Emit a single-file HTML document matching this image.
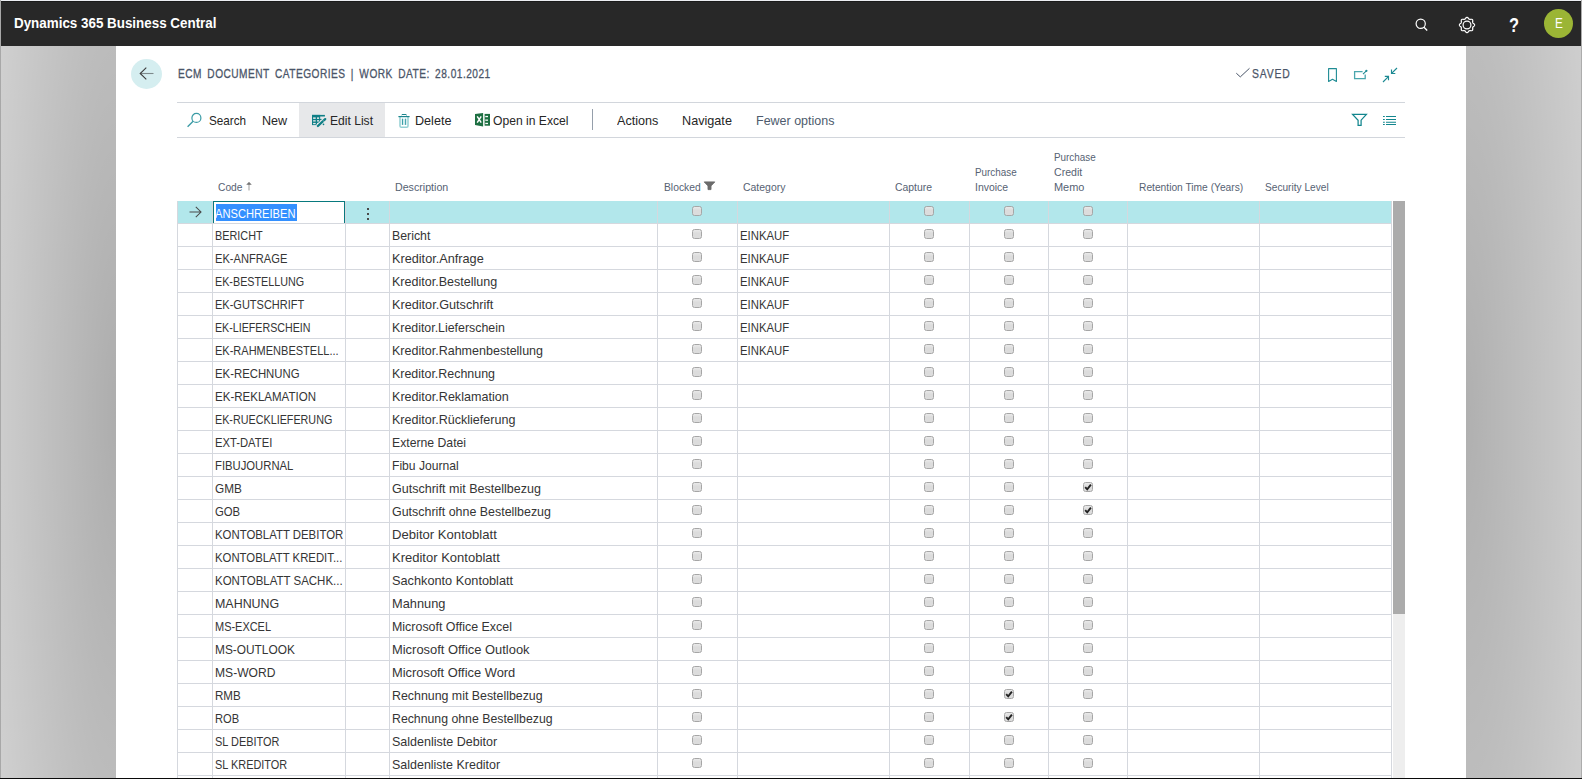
<!DOCTYPE html>
<html><head><meta charset="utf-8">
<style>
*{margin:0;padding:0;box-sizing:border-box}
html,body{width:1582px;height:779px;overflow:hidden;background:#c4c4c4;font-family:"Liberation Sans",sans-serif}
#frame{position:absolute;left:0;top:0;width:1582px;height:779px;overflow:hidden}
#bgL{position:absolute;left:0;top:0;width:116px;height:779px;background:radial-gradient(140px 950px at 116px 412px,rgba(0,0,0,.18),rgba(0,0,0,0)) ,#d3d3d3}
#bgR{position:absolute;left:1466px;top:0;width:116px;height:779px;background:radial-gradient(140px 950px at 0px 412px,rgba(0,0,0,.16),rgba(0,0,0,0)) ,#d1d1d1}
#bL{position:absolute;left:0;top:0;width:1px;height:779px;background:#a8a8a8}
#bR{position:absolute;left:1581px;top:0;width:1px;height:779px;background:#acacac}
#bT{position:absolute;left:1px;top:0;width:1580px;height:1px;background:#eceef2}
#bB{position:absolute;left:0;top:778px;width:1582px;height:1px;background:#0a0a0a}
#top{position:absolute;left:1px;top:1px;width:1580px;height:45px;background:#282828;border-top:1px solid #1b1b1b}
#panel{position:absolute;left:116px;top:46px;width:1350px;height:732px;background:#fff}
.tx{position:absolute;white-space:nowrap;line-height:20px;height:20px;transform-origin:0 50%}
.ic{position:absolute;overflow:visible}
#back{position:absolute;left:131px;top:59px;width:31px;height:30px;border-radius:50%;background:#d5eef0}
.hline{position:absolute;left:177px;width:1228px;height:1px;background:#d2d6dc}
#selbtn{position:absolute;left:299px;top:103px;width:86px;height:34px;background:#e7e8ea}
.row{position:absolute;left:177px;width:1214px;height:23px;border-bottom:1px solid #d5d8de}
.row.sel{background:#b2e7eb}
.vl{position:absolute;top:201px;height:577px;width:1px;background:#d5d8de}
.cb{position:absolute;width:10px;height:10px;border:1px solid #a6a6a6;border-radius:2.5px;background:linear-gradient(#e9e9e9,#dcdcdc 40%)}
.cb svg{position:absolute;left:-1px;top:-1px}
.editbox{position:absolute;left:213px;width:132px;height:22px;background:#fff;border:1px solid #08797e;border-bottom:none}
.hlbg{position:absolute;background:#3390ff}
.dot{position:absolute;width:2px;height:2px;background:#4a4a4a}
#sbt{position:absolute;left:1393px;top:201px;width:12px;height:577px;background:#eeeeee}
#sbh{position:absolute;left:1393px;top:201px;width:12px;height:413px;background:#ababab}
#avatar{position:absolute;left:1544px;top:9px;width:29px;height:29px;border-radius:50%;background:#9bb535}
</style></head><body>
<div id="frame">
<div id="bgL"></div><div id="bgR"></div>
<div id="panel"></div>
<div id="top"></div>
<!-- top bar icons -->
<svg class="ic" style="left:1414px;top:17px" width="16" height="16" viewBox="0 0 16 16"><circle cx="6.7" cy="6.8" r="4.6" fill="none" stroke="#fff" stroke-width="1.2"/><path d="M10 10.2L13.2 13.5" stroke="#fff" stroke-width="1.3"/></svg>
<svg class="ic" style="left:1458px;top:16px" width="18" height="18" viewBox="0 0 18 18"><path d="M16.60 9.00 L16.56 9.30 L16.44 9.59 L16.26 9.86 L16.03 10.11 L15.77 10.35 L15.50 10.56 L15.24 10.76 L15.02 10.96 L14.85 11.16 L14.73 11.37 L14.66 11.61 L14.64 11.88 L14.66 12.17 L14.70 12.49 L14.74 12.83 L14.76 13.18 L14.74 13.53 L14.68 13.85 L14.56 14.14 L14.37 14.37 L14.14 14.56 L13.85 14.68 L13.53 14.74 L13.18 14.76 L12.83 14.74 L12.49 14.70 L12.17 14.66 L11.88 14.64 L11.61 14.66 L11.37 14.73 L11.16 14.85 L10.96 15.02 L10.76 15.24 L10.56 15.50 L10.35 15.77 L10.11 16.03 L9.86 16.26 L9.59 16.44 L9.30 16.56 L9.00 16.60 L8.70 16.56 L8.41 16.44 L8.14 16.26 L7.89 16.03 L7.65 15.77 L7.44 15.50 L7.24 15.24 L7.04 15.02 L6.84 14.85 L6.63 14.73 L6.39 14.66 L6.12 14.64 L5.83 14.66 L5.51 14.70 L5.17 14.74 L4.82 14.76 L4.47 14.74 L4.15 14.68 L3.86 14.56 L3.63 14.37 L3.44 14.14 L3.32 13.85 L3.26 13.53 L3.24 13.18 L3.26 12.83 L3.30 12.49 L3.34 12.17 L3.36 11.88 L3.34 11.61 L3.27 11.37 L3.15 11.16 L2.98 10.96 L2.76 10.76 L2.50 10.56 L2.23 10.35 L1.97 10.11 L1.74 9.86 L1.56 9.59 L1.44 9.30 L1.40 9.00 L1.44 8.70 L1.56 8.41 L1.74 8.14 L1.97 7.89 L2.23 7.65 L2.50 7.44 L2.76 7.24 L2.98 7.04 L3.15 6.84 L3.27 6.63 L3.34 6.39 L3.36 6.12 L3.34 5.83 L3.30 5.51 L3.26 5.17 L3.24 4.82 L3.26 4.47 L3.32 4.15 L3.44 3.86 L3.63 3.63 L3.86 3.44 L4.15 3.32 L4.47 3.26 L4.82 3.24 L5.17 3.26 L5.51 3.30 L5.83 3.34 L6.12 3.36 L6.39 3.34 L6.63 3.27 L6.84 3.15 L7.04 2.98 L7.24 2.76 L7.44 2.50 L7.65 2.23 L7.89 1.97 L8.14 1.74 L8.41 1.56 L8.70 1.44 L9.00 1.40 L9.30 1.44 L9.59 1.56 L9.86 1.74 L10.11 1.97 L10.35 2.23 L10.56 2.50 L10.76 2.76 L10.96 2.98 L11.16 3.15 L11.37 3.27 L11.61 3.34 L11.88 3.36 L12.17 3.34 L12.49 3.30 L12.83 3.26 L13.18 3.24 L13.53 3.26 L13.85 3.32 L14.14 3.44 L14.37 3.63 L14.56 3.86 L14.68 4.15 L14.74 4.47 L14.76 4.82 L14.74 5.17 L14.70 5.51 L14.66 5.83 L14.64 6.12 L14.66 6.39 L14.73 6.63 L14.85 6.84 L15.02 7.04 L15.24 7.24 L15.50 7.44 L15.77 7.65 L16.03 7.89 L16.26 8.14 L16.44 8.41 L16.56 8.70Z" fill="none" stroke="#fff" stroke-width="1.2"/><circle cx="9" cy="9" r="3.9" fill="none" stroke="#fff" stroke-width="1.2"/></svg>
<div class="tx" style="left:1509px;top:15px;font-size:21px;line-height:20px;font-weight:bold;color:#fff;transform:scaleX(0.78)">?</div>
<div id="avatar"></div>
<div class="tx" style="left:1555px;top:13px;font-size:15.5px;line-height:20px;color:#fff;transform:scaleX(0.76)">E</div>
<!-- back -->
<div id="back"><svg width="31" height="30" viewBox="0 0 31 30"><path d="M9.5 14.5H22.5" fill="none" stroke="#7d8a8c" stroke-width="1.1"/><path d="M15.3 8.6L9.2 14.5L15.3 20.4" fill="none" stroke="#3d3d3d" stroke-width="1.1"/></svg></div>
<!-- saved check & right icons -->
<svg class="ic" style="left:1235px;top:67px" width="16" height="11" viewBox="0 0 16 11"><path d="M1.3 6.2L5.3 9.9L14.5 1.3" fill="none" stroke="#4a5568" stroke-width="1"/></svg>
<svg class="ic" style="left:1327px;top:67px" width="11" height="16" viewBox="0 0 11 16"><path d="M1.6 1.6H9.4V14.4L5.5 12.3L1.6 14.4Z" fill="none" stroke="#1f8c94" stroke-width="1.1" stroke-linejoin="round"/></svg>
<svg class="ic" style="left:1353px;top:68px" width="16" height="13" viewBox="0 0 16 13"><path d="M9.6 3.6H1.6V10.6H12.2V6.6" fill="none" stroke="#4aa6ad" stroke-width="1.3"/><path d="M10 6.2L13.6 2.6" stroke="#1d8a93" stroke-width="1.1"/><circle cx="13.4" cy="2.8" r="1.1" fill="#1d8a93"/></svg>
<svg class="ic" style="left:1382px;top:67px" width="16" height="16" viewBox="0 0 16 16"><path d="M15 1L9.6 6.4M9.5 2.6V6.5H13.3" fill="none" stroke="#1d8a93" stroke-width="1.15"/><path d="M1 15L6.4 9.6M2.8 9.4H6.5V13.2" fill="none" stroke="#1d8a93" stroke-width="1.15"/></svg>
<div class="hline" style="top:102px"></div>
<div class="hline" style="top:137px"></div>
<div id="selbtn"></div>
<!-- toolbar icons -->
<svg class="ic" style="left:186px;top:112px" width="17" height="16" viewBox="0 0 17 16"><circle cx="10.4" cy="5.9" r="4.5" fill="none" stroke="#3a9ba5" stroke-width="1.2"/><path d="M7.1 9.2L1.6 14.7" stroke="#3a9ba5" stroke-width="1.3"/></svg>
<svg class="ic" style="left:311px;top:113px" width="16" height="16" viewBox="0 0 16 16"><rect x="1" y="1.9" width="8.2" height="10.2" fill="#0f7f86"/><rect x="1" y="1.9" width="12.9" height="1.6" fill="#0f7f86"/><rect x="8" y="5.9" width="2.8" height="1.2" fill="#0f7f86"/><g fill="#e7e8ea"><rect x="2.1" y="4.4" width="2.6" height="1.5"/><rect x="6" y="4.4" width="2.1" height="1.5"/><rect x="2.1" y="7.2" width="2.6" height="1.3"/><rect x="6" y="7.2" width="2.1" height="1.3"/><rect x="2.1" y="9.9" width="2.6" height="1.3"/><rect x="6" y="9.9" width="2.1" height="1.3"/></g><path d="M6.6 13.2L14.4 5.8" stroke="#e7e8ea" stroke-width="4.2"/><path d="M6.9 13L14.2 6.1" stroke="#0f7f86" stroke-width="2.3" stroke-linecap="round"/><path d="M12.2 7.6L13.4 8.8" stroke="#e7e8ea" stroke-width="0.8"/><circle cx="12.5" cy="11.4" r="0.8" fill="#0f7f86"/></svg>
<svg class="ic" style="left:398px;top:113px" width="12" height="16" viewBox="0 0 12 16"><rect x="4.3" y="1.5" width="3.6" height="2" fill="none" stroke="#1d858d" stroke-width="1"/><path d="M2 4V13Q2 14.3 3.3 14.3H8.7Q10 14.3 10 13V4" fill="none" stroke="#94cfd4" stroke-width="1.5"/><rect x="4.4" y="5.8" width="3.4" height="6.2" fill="#d3ecee"/><path d="M4.4 5.7V11.9M7.7 5.7V11.9" stroke="#2a96a0" stroke-width="1"/><path d="M0.4 3.6H11.6" stroke="#1d858d" stroke-width="1.2"/></svg>
<svg class="ic" style="left:475px;top:113px" width="15" height="14" viewBox="0 0 15 14"><path d="M0 1.1L8.1 0V13.5L0 12.1Z" fill="#1d6f42"/><path d="M2.2 3.4L6.2 9.7M6.2 3.4L2.2 9.7" stroke="#fff" stroke-width="1.45"/><rect x="9.6" y="0.9" width="5.4" height="11.8" fill="#1d6f42"/><g fill="#fff"><rect x="10.3" y="2.9" width="2.7" height="1.3"/><rect x="10.3" y="6.5" width="2.7" height="1.3"/><rect x="10.3" y="9.8" width="2.7" height="1.3"/></g></svg>
<div class="ic" style="left:592px;top:109px;width:1px;height:21px;background:#959fab"></div>
<svg class="ic" style="left:1351px;top:113px" width="17" height="14" viewBox="0 0 17 14"><path d="M1.6 1.4H15.4L10.1 7.2V12.4H7.1V7.2Z" fill="none" stroke="#12868e" stroke-width="1.25" stroke-linejoin="miter"/></svg>
<svg class="ic" style="left:1382px;top:115px" width="15" height="11" viewBox="0 0 15 11"><path d="M1 1.5H2.8M4 1.5H14M1 4.4H2.8M4 4.4H14M1 7.2H2.8M4 7.2H14M1 9.5H2.8M4 9.5H14" stroke="#12868e" stroke-width="1.05"/></svg>
<div class="tx" style="left:14.10px;top:12.85px;font-size:14px;color:#fff;font-weight:bold;transform:scaleX(0.9567);">Dynamics 365 Business Central</div>
<div class="tx" style="left:177.60px;top:63.63px;font-size:12.6px;color:#4a5568;transform:scaleX(0.8046);-webkit-text-stroke:0.3px #4a5568;letter-spacing:0.6px;word-spacing:2.6px;">ECM DOCUMENT CATEGORIES | WORK DATE: 28.01.2021</div>
<div class="tx" style="left:1251.50px;top:63.63px;font-size:12.6px;color:#4a5568;transform:scaleX(0.8241);-webkit-text-stroke:0.25px #4a5568;letter-spacing:1.0px;">SAVED</div>
<div class="tx" style="left:208.70px;top:110.50px;font-size:13.0px;color:#262626;transform:scaleX(0.8995);">Search</div>
<div class="tx" style="left:262.20px;top:110.50px;font-size:13.0px;color:#262626;transform:scaleX(0.9670);">New</div>
<div class="tx" style="left:329.80px;top:110.50px;font-size:13.0px;color:#262626;transform:scaleX(0.9299);">Edit List</div>
<div class="tx" style="left:415.30px;top:110.50px;font-size:13.0px;color:#262626;transform:scaleX(0.9688);">Delete</div>
<div class="tx" style="left:492.90px;top:110.50px;font-size:13.0px;color:#262626;transform:scaleX(0.9322);">Open in Excel</div>
<div class="tx" style="left:616.50px;top:110.50px;font-size:13.0px;color:#262626;transform:scaleX(0.9700);">Actions</div>
<div class="tx" style="left:681.80px;top:110.50px;font-size:13.0px;color:#262626;transform:scaleX(0.9728);">Navigate</div>
<div class="tx" style="left:755.80px;top:110.50px;font-size:13.0px;color:#4e5b6d;transform:scaleX(0.9607);">Fewer options</div>
<div class="tx" style="left:218.00px;top:177.28px;font-size:10.75px;color:#566273;transform:scaleX(0.9530);">Code</div>
<svg class="ic" style="left:246px;top:181px" width="6" height="10" viewBox="0 0 6 10"><path d="M3 3V9.5" fill="none" stroke="#a6a6a6" stroke-width="1.1"/><path d="M0.9 3.7L3 1.4L5.1 3.7" fill="#6b6b6b" stroke="#6b6b6b" stroke-width="1"/></svg>
<div class="tx" style="left:395.00px;top:177.28px;font-size:10.75px;color:#566273;transform:scaleX(0.9905);">Description</div>
<div class="tx" style="left:663.50px;top:177.28px;font-size:10.75px;color:#566273;transform:scaleX(0.9583);">Blocked</div>
<svg class="ic" style="left:703px;top:181px" width="13" height="10" viewBox="0 0 13 10"><path d="M1.2 0.9H11.8L8 4.9V8.6H5V4.9Z" fill="#6b6b6b" stroke="#6b6b6b" stroke-width="0.9" stroke-linejoin="round"/></svg>
<div class="tx" style="left:743.00px;top:177.28px;font-size:10.75px;color:#566273;transform:scaleX(0.9728);">Category</div>
<div class="tx" style="left:895.00px;top:177.28px;font-size:10.75px;color:#566273;transform:scaleX(0.9678);">Capture</div>
<div class="tx" style="left:975.00px;top:162.28px;font-size:10.75px;color:#566273;transform:scaleX(0.9188);">Purchase</div>
<div class="tx" style="left:975.00px;top:177.28px;font-size:10.75px;color:#566273;transform:scaleX(0.9737);">Invoice</div>
<div class="tx" style="left:1054.00px;top:147.28px;font-size:10.75px;color:#566273;transform:scaleX(0.9188);">Purchase</div>
<div class="tx" style="left:1054.00px;top:162.28px;font-size:10.75px;color:#566273;transform:scaleX(0.9836);">Credit</div>
<div class="tx" style="left:1054.00px;top:177.28px;font-size:10.75px;color:#566273;transform:scaleX(1.0175);">Memo</div>
<div class="tx" style="left:1139.00px;top:177.28px;font-size:10.75px;color:#566273;transform:scaleX(0.9514);">Retention Time (Years)</div>
<div class="tx" style="left:1265.00px;top:177.28px;font-size:10.75px;color:#566273;transform:scaleX(0.9424);">Security Level</div>
<div class="row sel" style="top:201px"></div>
<div class="editbox" style="top:201px"></div>
<div class="hlbg" style="left:216px;top:204px;width:81px;height:17px"></div>
<div class="tx" style="left:215.30px;top:203.50px;font-size:13.0px;color:#fff;transform:scaleX(0.8564);">ANSCHREIBEN</div>
<svg class="ic" style="left:189px;top:206px" width="13" height="12" viewBox="0 0 13 12"><path d="M0.5 6H12M6.8 0.9L12 6L6.8 11.1" fill="none" stroke="#4a4a4a" stroke-width="1.05"/></svg>
<div class="dot" style="left:367px;top:208px"></div>
<div class="dot" style="left:367px;top:213px"></div>
<div class="dot" style="left:367px;top:218px"></div>
<div class="cb" style="left:692px;top:206px"></div>
<div class="cb" style="left:924px;top:206px"></div>
<div class="cb" style="left:1004px;top:206px"></div>
<div class="cb" style="left:1083px;top:206px"></div>
<div class="row" style="top:224px"></div>
<div class="tx" style="left:214.80px;top:225.50px;font-size:13.0px;color:#353535;transform:scaleX(0.8344);">BERICHT</div>
<div class="tx" style="left:391.80px;top:225.50px;font-size:13.0px;color:#353535;transform:scaleX(0.9475);">Bericht</div>
<div class="tx" style="left:739.80px;top:225.50px;font-size:13.0px;color:#353535;transform:scaleX(0.8720);">EINKAUF</div>
<div class="cb" style="left:692px;top:229px"></div>
<div class="cb" style="left:924px;top:229px"></div>
<div class="cb" style="left:1004px;top:229px"></div>
<div class="cb" style="left:1083px;top:229px"></div>
<div class="row" style="top:247px"></div>
<div class="tx" style="left:214.80px;top:248.50px;font-size:13.0px;color:#353535;transform:scaleX(0.8559);">EK-ANFRAGE</div>
<div class="tx" style="left:391.80px;top:248.50px;font-size:13.0px;color:#353535;transform:scaleX(0.9759);">Kreditor.Anfrage</div>
<div class="tx" style="left:739.80px;top:248.50px;font-size:13.0px;color:#353535;transform:scaleX(0.8720);">EINKAUF</div>
<div class="cb" style="left:692px;top:252px"></div>
<div class="cb" style="left:924px;top:252px"></div>
<div class="cb" style="left:1004px;top:252px"></div>
<div class="cb" style="left:1083px;top:252px"></div>
<div class="row" style="top:270px"></div>
<div class="tx" style="left:214.80px;top:271.50px;font-size:13.0px;color:#353535;transform:scaleX(0.8284);">EK-BESTELLUNG</div>
<div class="tx" style="left:391.80px;top:271.50px;font-size:13.0px;color:#353535;transform:scaleX(0.9639);">Kreditor.Bestellung</div>
<div class="tx" style="left:739.80px;top:271.50px;font-size:13.0px;color:#353535;transform:scaleX(0.8720);">EINKAUF</div>
<div class="cb" style="left:692px;top:275px"></div>
<div class="cb" style="left:924px;top:275px"></div>
<div class="cb" style="left:1004px;top:275px"></div>
<div class="cb" style="left:1083px;top:275px"></div>
<div class="row" style="top:293px"></div>
<div class="tx" style="left:214.80px;top:294.50px;font-size:13.0px;color:#353535;transform:scaleX(0.8466);">EK-GUTSCHRIFT</div>
<div class="tx" style="left:391.80px;top:294.50px;font-size:13.0px;color:#353535;transform:scaleX(0.9744);">Kreditor.Gutschrift</div>
<div class="tx" style="left:739.80px;top:294.50px;font-size:13.0px;color:#353535;transform:scaleX(0.8720);">EINKAUF</div>
<div class="cb" style="left:692px;top:298px"></div>
<div class="cb" style="left:924px;top:298px"></div>
<div class="cb" style="left:1004px;top:298px"></div>
<div class="cb" style="left:1083px;top:298px"></div>
<div class="row" style="top:316px"></div>
<div class="tx" style="left:214.80px;top:317.50px;font-size:13.0px;color:#353535;transform:scaleX(0.8211);">EK-LIEFERSCHEIN</div>
<div class="tx" style="left:391.80px;top:317.50px;font-size:13.0px;color:#353535;transform:scaleX(0.9523);">Kreditor.Lieferschein</div>
<div class="tx" style="left:739.80px;top:317.50px;font-size:13.0px;color:#353535;transform:scaleX(0.8720);">EINKAUF</div>
<div class="cb" style="left:692px;top:321px"></div>
<div class="cb" style="left:924px;top:321px"></div>
<div class="cb" style="left:1004px;top:321px"></div>
<div class="cb" style="left:1083px;top:321px"></div>
<div class="row" style="top:339px"></div>
<div class="tx" style="left:214.80px;top:340.50px;font-size:13.0px;color:#353535;transform:scaleX(0.8468);">EK-RAHMENBESTELL...</div>
<div class="tx" style="left:391.80px;top:340.50px;font-size:13.0px;color:#353535;transform:scaleX(0.9632);">Kreditor.Rahmenbestellung</div>
<div class="tx" style="left:739.80px;top:340.50px;font-size:13.0px;color:#353535;transform:scaleX(0.8720);">EINKAUF</div>
<div class="cb" style="left:692px;top:344px"></div>
<div class="cb" style="left:924px;top:344px"></div>
<div class="cb" style="left:1004px;top:344px"></div>
<div class="cb" style="left:1083px;top:344px"></div>
<div class="row" style="top:362px"></div>
<div class="tx" style="left:214.80px;top:363.50px;font-size:13.0px;color:#353535;transform:scaleX(0.8737);">EK-RECHNUNG</div>
<div class="tx" style="left:391.80px;top:363.50px;font-size:13.0px;color:#353535;transform:scaleX(0.9567);">Kreditor.Rechnung</div>
<div class="cb" style="left:692px;top:367px"></div>
<div class="cb" style="left:924px;top:367px"></div>
<div class="cb" style="left:1004px;top:367px"></div>
<div class="cb" style="left:1083px;top:367px"></div>
<div class="row" style="top:385px"></div>
<div class="tx" style="left:214.80px;top:386.50px;font-size:13.0px;color:#353535;transform:scaleX(0.8867);">EK-REKLAMATION</div>
<div class="tx" style="left:391.80px;top:386.50px;font-size:13.0px;color:#353535;transform:scaleX(0.9667);">Kreditor.Reklamation</div>
<div class="cb" style="left:692px;top:390px"></div>
<div class="cb" style="left:924px;top:390px"></div>
<div class="cb" style="left:1004px;top:390px"></div>
<div class="cb" style="left:1083px;top:390px"></div>
<div class="row" style="top:408px"></div>
<div class="tx" style="left:214.80px;top:409.50px;font-size:13.0px;color:#353535;transform:scaleX(0.8284);">EK-RUECKLIEFERUNG</div>
<div class="tx" style="left:391.80px;top:409.50px;font-size:13.0px;color:#353535;transform:scaleX(0.9646);">Kreditor.Rücklieferung</div>
<div class="cb" style="left:692px;top:413px"></div>
<div class="cb" style="left:924px;top:413px"></div>
<div class="cb" style="left:1004px;top:413px"></div>
<div class="cb" style="left:1083px;top:413px"></div>
<div class="row" style="top:431px"></div>
<div class="tx" style="left:214.80px;top:432.50px;font-size:13.0px;color:#353535;transform:scaleX(0.8651);">EXT-DATEI</div>
<div class="tx" style="left:391.80px;top:432.50px;font-size:13.0px;color:#353535;transform:scaleX(0.9405);">Externe Datei</div>
<div class="cb" style="left:692px;top:436px"></div>
<div class="cb" style="left:924px;top:436px"></div>
<div class="cb" style="left:1004px;top:436px"></div>
<div class="cb" style="left:1083px;top:436px"></div>
<div class="row" style="top:454px"></div>
<div class="tx" style="left:214.80px;top:455.50px;font-size:13.0px;color:#353535;transform:scaleX(0.8679);">FIBUJOURNAL</div>
<div class="tx" style="left:391.80px;top:455.50px;font-size:13.0px;color:#353535;transform:scaleX(0.9329);">Fibu Journal</div>
<div class="cb" style="left:692px;top:459px"></div>
<div class="cb" style="left:924px;top:459px"></div>
<div class="cb" style="left:1004px;top:459px"></div>
<div class="cb" style="left:1083px;top:459px"></div>
<div class="row" style="top:477px"></div>
<div class="tx" style="left:214.80px;top:478.50px;font-size:13.0px;color:#353535;transform:scaleX(0.9059);">GMB</div>
<div class="tx" style="left:391.80px;top:478.50px;font-size:13.0px;color:#353535;transform:scaleX(0.9636);">Gutschrift mit Bestellbezug</div>
<div class="cb" style="left:692px;top:482px"></div>
<div class="cb" style="left:924px;top:482px"></div>
<div class="cb" style="left:1004px;top:482px"></div>
<div class="cb chk" style="left:1083px;top:482px"><svg width="10" height="10" viewBox="0 0 10 10"><path d="M2.2 5.2L4.2 7.3L7.9 2.6" fill="none" stroke="#222" stroke-width="1.9"/></svg></div>
<div class="row" style="top:500px"></div>
<div class="tx" style="left:214.80px;top:501.50px;font-size:13.0px;color:#353535;transform:scaleX(0.8711);">GOB</div>
<div class="tx" style="left:391.80px;top:501.50px;font-size:13.0px;color:#353535;transform:scaleX(0.9563);">Gutschrift ohne Bestellbezug</div>
<div class="cb" style="left:692px;top:505px"></div>
<div class="cb" style="left:924px;top:505px"></div>
<div class="cb" style="left:1004px;top:505px"></div>
<div class="cb chk" style="left:1083px;top:505px"><svg width="10" height="10" viewBox="0 0 10 10"><path d="M2.2 5.2L4.2 7.3L7.9 2.6" fill="none" stroke="#222" stroke-width="1.9"/></svg></div>
<div class="row" style="top:523px"></div>
<div class="tx" style="left:214.80px;top:524.50px;font-size:13.0px;color:#353535;transform:scaleX(0.8757);">KONTOBLATT DEBITOR</div>
<div class="tx" style="left:391.80px;top:524.50px;font-size:13.0px;color:#353535;transform:scaleX(1.0071);">Debitor Kontoblatt</div>
<div class="cb" style="left:692px;top:528px"></div>
<div class="cb" style="left:924px;top:528px"></div>
<div class="cb" style="left:1004px;top:528px"></div>
<div class="cb" style="left:1083px;top:528px"></div>
<div class="row" style="top:546px"></div>
<div class="tx" style="left:214.80px;top:547.50px;font-size:13.0px;color:#353535;transform:scaleX(0.8730);">KONTOBLATT KREDIT...</div>
<div class="tx" style="left:391.80px;top:547.50px;font-size:13.0px;color:#353535;transform:scaleX(1.0007);">Kreditor Kontoblatt</div>
<div class="cb" style="left:692px;top:551px"></div>
<div class="cb" style="left:924px;top:551px"></div>
<div class="cb" style="left:1004px;top:551px"></div>
<div class="cb" style="left:1083px;top:551px"></div>
<div class="row" style="top:569px"></div>
<div class="tx" style="left:214.80px;top:570.50px;font-size:13.0px;color:#353535;transform:scaleX(0.8835);">KONTOBLATT SACHK...</div>
<div class="tx" style="left:391.80px;top:570.50px;font-size:13.0px;color:#353535;transform:scaleX(0.9800);">Sachkonto Kontoblatt</div>
<div class="cb" style="left:692px;top:574px"></div>
<div class="cb" style="left:924px;top:574px"></div>
<div class="cb" style="left:1004px;top:574px"></div>
<div class="cb" style="left:1083px;top:574px"></div>
<div class="row" style="top:592px"></div>
<div class="tx" style="left:214.80px;top:593.50px;font-size:13.0px;color:#353535;transform:scaleX(0.9565);">MAHNUNG</div>
<div class="tx" style="left:391.80px;top:593.50px;font-size:13.0px;color:#353535;transform:scaleX(0.9846);">Mahnung</div>
<div class="cb" style="left:692px;top:597px"></div>
<div class="cb" style="left:924px;top:597px"></div>
<div class="cb" style="left:1004px;top:597px"></div>
<div class="cb" style="left:1083px;top:597px"></div>
<div class="row" style="top:615px"></div>
<div class="tx" style="left:214.80px;top:616.50px;font-size:13.0px;color:#353535;transform:scaleX(0.8427);">MS-EXCEL</div>
<div class="tx" style="left:391.80px;top:616.50px;font-size:13.0px;color:#353535;transform:scaleX(0.9562);">Microsoft Office Excel</div>
<div class="cb" style="left:692px;top:620px"></div>
<div class="cb" style="left:924px;top:620px"></div>
<div class="cb" style="left:1004px;top:620px"></div>
<div class="cb" style="left:1083px;top:620px"></div>
<div class="row" style="top:638px"></div>
<div class="tx" style="left:214.80px;top:639.50px;font-size:13.0px;color:#353535;transform:scaleX(0.9132);">MS-OUTLOOK</div>
<div class="tx" style="left:391.80px;top:639.50px;font-size:13.0px;color:#353535;transform:scaleX(0.9932);">Microsoft Office Outlook</div>
<div class="cb" style="left:692px;top:643px"></div>
<div class="cb" style="left:924px;top:643px"></div>
<div class="cb" style="left:1004px;top:643px"></div>
<div class="cb" style="left:1083px;top:643px"></div>
<div class="row" style="top:661px"></div>
<div class="tx" style="left:214.80px;top:662.50px;font-size:13.0px;color:#353535;transform:scaleX(0.9299);">MS-WORD</div>
<div class="tx" style="left:391.80px;top:662.50px;font-size:13.0px;color:#353535;transform:scaleX(0.9898);">Microsoft Office Word</div>
<div class="cb" style="left:692px;top:666px"></div>
<div class="cb" style="left:924px;top:666px"></div>
<div class="cb" style="left:1004px;top:666px"></div>
<div class="cb" style="left:1083px;top:666px"></div>
<div class="row" style="top:684px"></div>
<div class="tx" style="left:214.80px;top:685.50px;font-size:13.0px;color:#353535;transform:scaleX(0.8914);">RMB</div>
<div class="tx" style="left:391.80px;top:685.50px;font-size:13.0px;color:#353535;transform:scaleX(0.9517);">Rechnung mit Bestellbezug</div>
<div class="cb" style="left:692px;top:689px"></div>
<div class="cb" style="left:924px;top:689px"></div>
<div class="cb chk" style="left:1004px;top:689px"><svg width="10" height="10" viewBox="0 0 10 10"><path d="M2.2 5.2L4.2 7.3L7.9 2.6" fill="none" stroke="#222" stroke-width="1.9"/></svg></div>
<div class="cb" style="left:1083px;top:689px"></div>
<div class="row" style="top:707px"></div>
<div class="tx" style="left:214.80px;top:708.50px;font-size:13.0px;color:#353535;transform:scaleX(0.8553);">ROB</div>
<div class="tx" style="left:391.80px;top:708.50px;font-size:13.0px;color:#353535;transform:scaleX(0.9454);">Rechnung ohne Bestellbezug</div>
<div class="cb" style="left:692px;top:712px"></div>
<div class="cb" style="left:924px;top:712px"></div>
<div class="cb chk" style="left:1004px;top:712px"><svg width="10" height="10" viewBox="0 0 10 10"><path d="M2.2 5.2L4.2 7.3L7.9 2.6" fill="none" stroke="#222" stroke-width="1.9"/></svg></div>
<div class="cb" style="left:1083px;top:712px"></div>
<div class="row" style="top:730px"></div>
<div class="tx" style="left:214.80px;top:731.50px;font-size:13.0px;color:#353535;transform:scaleX(0.8407);">SL DEBITOR</div>
<div class="tx" style="left:391.80px;top:731.50px;font-size:13.0px;color:#353535;transform:scaleX(0.9640);">Saldenliste Debitor</div>
<div class="cb" style="left:692px;top:735px"></div>
<div class="cb" style="left:924px;top:735px"></div>
<div class="cb" style="left:1004px;top:735px"></div>
<div class="cb" style="left:1083px;top:735px"></div>
<div class="row" style="top:753px"></div>
<div class="tx" style="left:214.80px;top:754.50px;font-size:13.0px;color:#353535;transform:scaleX(0.8402);">SL KREDITOR</div>
<div class="tx" style="left:391.80px;top:754.50px;font-size:13.0px;color:#353535;transform:scaleX(0.9593);">Saldenliste Kreditor</div>
<div class="cb" style="left:692px;top:758px"></div>
<div class="cb" style="left:924px;top:758px"></div>
<div class="cb" style="left:1004px;top:758px"></div>
<div class="cb" style="left:1083px;top:758px"></div>
<div class="vl" style="left:177px"></div>
<div class="vl" style="left:212px"></div>
<div class="vl" style="left:345px"></div>
<div class="vl" style="left:389px"></div>
<div class="vl" style="left:657px"></div>
<div class="vl" style="left:737px"></div>
<div class="vl" style="left:889px"></div>
<div class="vl" style="left:969px"></div>
<div class="vl" style="left:1048px"></div>
<div class="vl" style="left:1127px"></div>
<div class="vl" style="left:1259px"></div>
<div class="vl" style="left:1391px"></div>
<div id="sbt"></div><div id="sbh"></div>
<div id="bL"></div><div id="bR"></div><div id="bT"></div><div id="bB"></div>
</div>
</body></html>
